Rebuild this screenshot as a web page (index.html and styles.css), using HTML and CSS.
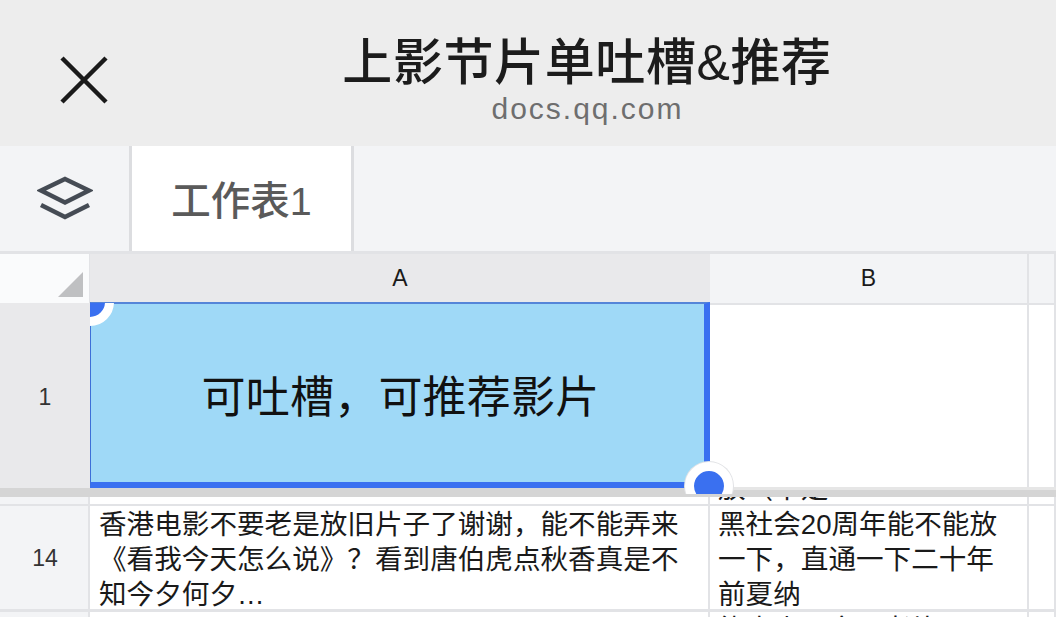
FILE: index.html
```html
<!DOCTYPE html>
<html lang="zh-CN">
<head>
  <meta charset="UTF-8" />
  <title>上影节片单吐槽&amp;推荐</title>
  <link rel="stylesheet" href="styles.css">
</head>
<body>
<main class="app">
  <!-- Browser title bar -->
  <header class="titlebar">
    <svg class="close-icon" width="48" height="48" viewBox="0 0 48 48" aria-label="关闭">
      <path d="M2 2 L46 46 M46 2 L2 46" />
    </svg>
    <div class="title-text">
      <div class="doc-title">上影节片单吐槽&amp;推荐</div>
      <div class="doc-host">docs.qq.com</div>
    </div>
  </header>

  <!-- Sheet tabs -->
  <nav class="tabbar">
    <div class="tab-menu">
      <svg width="56" height="46" viewBox="0 0 56 46" aria-label="工作表列表">
        <path d="M28 4 L52 15.5 L28 27.5 L4 15.5 Z" />
        <path d="M4 30 L28 42 L52 30" />
      </svg>
    </div>
    <div class="tab-active">工作表1</div>
  </nav>

  <!-- Grid -->
  <section class="sheet">
    <div class="col-head">
      <div class="corner"><span class="corner-mark"></span></div>
      <div class="col-label col-a selected">A</div>
      <div class="col-label col-b">B</div>
      <div class="col-label col-c"></div>
    </div>

    <div class="row-frozen">
      <div class="row-label selected">1</div>
      <div class="cell-a1">可吐槽，可推荐影片</div>
      <div class="cell-blank col-b"></div>
      <div class="cell-blank col-c"></div>
    </div>

    <div class="freeze-line"></div>

    <div class="row-scroll">
      <div class="row-label"></div>
      <div class="cell-text col-a"></div>
      <div class="cell-text col-b clip-up"><div>放（不是</div></div>
      <div class="cell-text col-c"></div>
    </div>

    <div class="row-14">
      <div class="row-label">14</div>
      <div class="cell-text col-a">香港电影不要老是放旧片子了谢谢，能不能弄来《看我今天怎么说》？看到唐伯虎点秋香真是不知今夕何夕…</div>
      <div class="cell-text col-b">黑社会20周年能不能放一下，直通一下二十年前夏纳</div>
      <div class="cell-text col-c"></div>
    </div>

    <div class="row-next">
      <div class="row-label"></div>
      <div class="cell-text col-a"></div>
      <div class="cell-text col-b">能来点王家卫老片吗</div>
      <div class="cell-text col-c"></div>
    </div>

    <span class="handle handle-top"></span>
    <span class="handle handle-bottom"></span>
  </section>
</main>
</body>
</html>
```

FILE: styles.css
```css
* { box-sizing: border-box; padding: 0; margin: 0; }
html, body { height: 100%; overflow: hidden; }
body {
  background: #fff;
  font-family: "Liberation Sans", "Noto Sans CJK SC", sans-serif;
  color: #1a1a1a;
}
.app { width: 1056px; height: 617px; overflow: hidden; display: flex; flex-direction: column; }

/* title bar */
.titlebar { height: 146px; flex: none; background: #ededed; position: relative; }
.close-icon { position: absolute; left: 60px; top: 56px; }
.close-icon path { fill: none; stroke: #1a1a1a; stroke-width: 4.5; stroke-linecap: butt; }
.title-text { display: flex; flex-direction: column; align-items: center; padding-top: 33px; padding-left: 118px; }
.doc-title { font-size: 50px; line-height: 60px; letter-spacing: 0.6px; font-weight: 500; color: #1c1c1c; }
.doc-host { font-size: 30px; line-height: 32px; letter-spacing: 2px; margin-left: 1px; color: #6e6e6e; }

/* tabs */
.tabbar { height: 108px; flex: none; display: flex; background: #f3f4f6; border-bottom: 3px solid #e2e3e6; }
.tab-menu { width: 132px; border-right: 3px solid #dcdde0; display: flex; align-items: center; justify-content: center; padding-bottom: 1px; }
.tab-menu svg { fill: none; stroke: #454b54; stroke-width: 4.5; }
.tab-active { width: 222px; background: #fff; border-right: 3px solid #dcdde0; display: flex; align-items: center; justify-content: center; font-size: 39.5px; font-weight: 500; color: #5a5a5a; padding-bottom: 3px; }

/* grid */
.sheet { flex: 1; position: relative; overflow: hidden; background: #fff; }
.col-a { width: 620px; }
.col-b { width: 319px; }
.col-c { flex: 1; }

.col-head { display: flex; height: 51px; border-bottom: 2px solid #e2e3e6; }
.corner { width: 90px; background: #fafbfc; border-right: 1px solid #e2e3e6; position: relative; }
.corner-mark { position: absolute; right: 6px; bottom: 6px; width: 25px; height: 25px; background: #bfc0c2; clip-path: polygon(100% 0, 100% 100%, 0 100%); }
.col-label { background: #f3f4f6; border-right: 2px solid #e2e3e6; display: flex; align-items: center; justify-content: center; font-size: 23px; }
.col-label.selected { background: #e9e9eb; border-right: 0; }

.row-label { width: 90px; flex: none; background: #f3f4f6; border-right: 2px solid #e2e3e6; display: flex; align-items: center; justify-content: center; font-size: 23px; color: #333; }
.row-label.selected { background: #e9e9eb; border-right: 0; padding-top: 4px; }

.row-frozen { display: flex; height: 186px; margin-top: -3px; }
.cell-a1 {
  width: 620px; background: #9fd9f7;
  border-top: 2px solid #5585d8; border-left: 1px solid #3d6fd8;
  border-right: 6px solid #3a70f0; border-bottom: 6px solid #3a70f0;
  display: flex; align-items: center; justify-content: center;
  padding: 2px 0 0 6px;
  font-size: 44px; letter-spacing: 0.2px; color: #111;
}
.cell-blank { border-right: 2px solid #e2e3e6; }

.freeze-line { height: 9px; background: #d5d5d5; flex: none; position: relative; z-index: 1; }
.freeze-line::after { content: ''; position: absolute; left: 710px; right: 0; top: -1px; height: 3px; background: #e6e6e6; }

.row-scroll { display: flex; height: 9px; overflow: hidden; border-bottom: 2px solid #e2e3e6; }
.cell-text { background: #fff; border-right: 2px solid #e2e3e6; font-size: 27.6px; line-height: 35px; padding: 1px 9px 0; overflow: hidden; }
.cell-text.col-b { padding-left: 8px; }
.clip-up div { margin-top: -27px; }

.row-14 { display: flex; height: 106px; border-bottom: 3px solid #e2e3e6; }
.row-14 .row-label { padding: 2px 0 0 2px; }
.row-next { display: flex; height: 40px; }
.row-next .cell-text { padding-top: 3px; line-height: 30px; }

/* selection handles */
.handle { position: absolute; width: 48px; height: 48px; border-radius: 50%; background: #3a70f0; border: 9px solid #fff; z-index: 2; }
.handle-top { left: 66px; top: 24px; clip-path: inset(25px 0 0 24px); }
.handle-bottom { left: 685px; top: 208px; box-shadow: inset 0 0 0 0 #fff, 0 0 0 1px #e2e3e6; clip-path: inset(-1px -1px 16px -1px); }
```
